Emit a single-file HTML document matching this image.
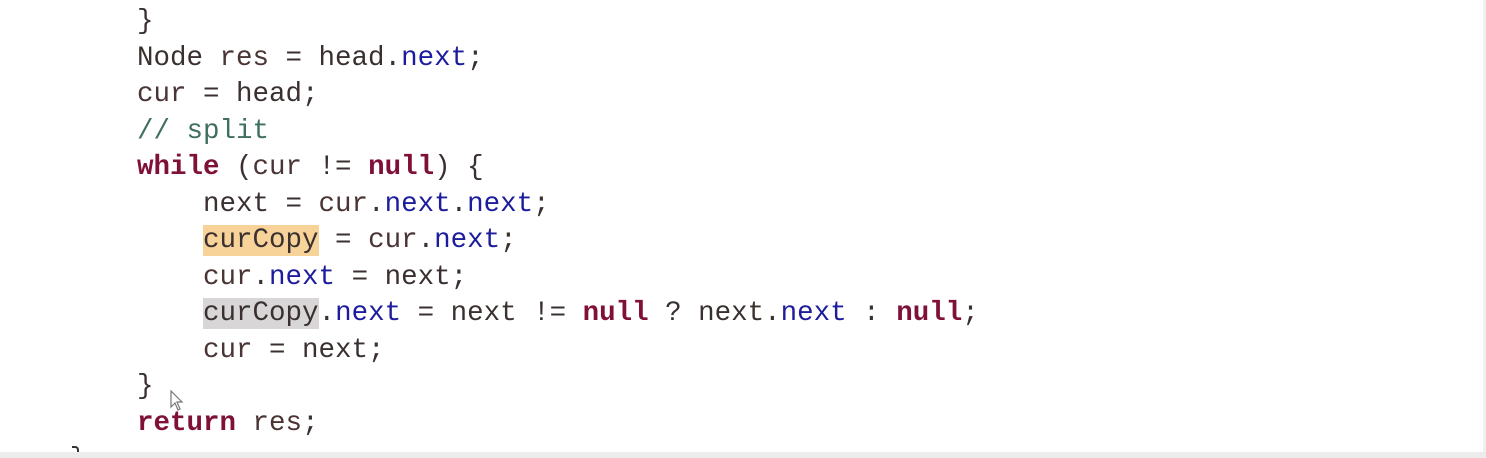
<!DOCTYPE html>
<html><head><style>
html,body{margin:0;padding:0;background:#fff;width:1486px;height:458px;overflow:hidden;position:relative}
pre{margin:0;position:absolute;left:137px;top:4px;font-family:"Liberation Mono",monospace;font-size:27.5px;line-height:36.5px;color:#3a3030;letter-spacing:0}
.k{color:#7f1038;font-weight:bold}
.f{color:#1c1c9c}
.c{color:#3f6f5f}
.v{color:#4a3434}
.hl{background:#f7d39a}
.hg{background:#d8d6d6}
.bar{position:absolute;left:0;top:452px;width:1486px;height:6px;background:#ececec}
.rb{position:absolute;right:0;top:0;width:3px;height:452px;background:#f0f0f0}
</style></head><body>
<pre>}
Node <span class="v">res</span> = head.<span class="f">next</span>;
<span class="v">cur</span> = head;
<span class="c">// split</span>
<span class="k">while</span> (<span class="v">cur</span> != <span class="k">null</span>) {
    next = <span class="v">cur</span>.<span class="f">next</span>.<span class="f">next</span>;
    <span class="hl">curCopy</span> = <span class="v">cur</span>.<span class="f">next</span>;
    <span class="v">cur</span>.<span class="f">next</span> = next;
    <span class="hg">curCopy</span>.<span class="f">next</span> = next != <span class="k">null</span> ? next.<span class="f">next</span> : <span class="k">null</span>;
    <span class="v">cur</span> = next;
}
<span class="k">return</span> <span class="v">res</span>;</pre>
<svg style="position:absolute;left:170px;top:390px" width="16" height="22" viewBox="0 0 16 22"><path d="M1 1 L1 17 L5 13 L8 20 L10 19 L7 12 L12 12 Z" fill="#fff" stroke="#777" stroke-width="1.2"/></svg>
<div style="position:absolute;left:72px;top:446px;width:5px;height:6px;border-right:2px solid #333;border-top:2px solid #333;border-radius:0 4px 0 0"></div>
<div class="rb"></div>
<div class="bar"></div>
</body></html>
